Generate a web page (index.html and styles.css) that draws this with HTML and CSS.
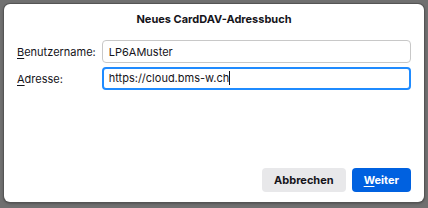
FILE: index.html
```html
<!DOCTYPE html>
<html lang="de">
<head>
<meta charset="UTF-8">
<title>Neues CardDAV-Adressbuch</title>
<link rel="stylesheet" href="styles.css">
</head>
<body>
<div class="dialog">
  <div class="title">Neues CardDAV-Adressbuch</div>
  <div class="form">
    <label class="label" for="username"><u>B</u>enutzername:</label>
    <input class="field" id="username" type="text" value="LP6AMuster">
    <label class="label"><u>A</u>dresse:</label>
    <div class="field focused">https://cloud.bms-w.ch<span class="caret"></span></div>
  </div>
  <div class="buttons">
    <button class="btn">Abbrechen</button>
    <button class="btn primary"><u>W</u>eiter</button>
  </div>
</div>
</body>
</html>
```

FILE: styles.css
```css
html, body {
  margin: 0;
  height: 100%;
}

body {
  background: #707070;
  font-family: Inter, "Noto Sans", sans-serif;
  font-size: 11px;
  color: #15141a;
  padding: 4px;
  box-sizing: border-box;
}

.dialog {
  width: 420px;
  height: 198px;
  background: #fff;
  border-radius: 6px;
  box-shadow: 0 0 0 1px #555, 0 1px 3px rgba(0, 0, 0, 0.5);
  box-sizing: border-box;
  padding: 7px 13px 10px;
  display: flex;
  flex-direction: column;
}

.title {
  text-align: center;
  font-weight: 700;
  line-height: 16px;
}

.form {
  margin-top: 13px;
  display: grid;
  grid-template-columns: auto 1fr;
  column-gap: 6px;
  row-gap: 4px;
  align-items: center;
}

.label u {
  text-decoration-thickness: 1px;
  text-underline-offset: 2px;
}

.field {
  height: 23px;
  box-sizing: border-box;
  border: 1px solid #c8c8c8;
  border-radius: 4px;
  padding: 0 6px;
  font: inherit;
  color: inherit;
  line-height: 21px;
  outline: none;
  background: #fff;
}

.focused {
  border: 2px solid #1f8bff;
  padding: 0 5px;
  line-height: 19px;
  white-space: nowrap;
}

.caret {
  display: inline-block;
  width: 1px;
  height: 14px;
  background: #15141a;
  vertical-align: -3px;
}

.buttons {
  margin-top: auto;
  display: flex;
  justify-content: flex-end;
  gap: 6px;
}

.btn {
  height: 24px;
  border: none;
  border-radius: 4px;
  padding: 0 12px;
  font: inherit;
  font-weight: 700;
  background: #e8e8ea;
  color: #15141a;
}

.btn.primary {
  background: #0061e0;
  color: #fff;
}

.btn u {
  text-decoration-thickness: 1px;
  text-underline-offset: 2px;
}
```
